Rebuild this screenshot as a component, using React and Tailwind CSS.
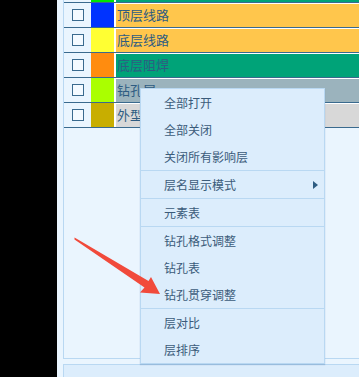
import React from 'react';

const rows = [
  { swatch: 'bg-[#00e600]', label: 'bg-[#00a378]', name: '' },
  { swatch: 'bg-[#0033ff]', label: 'bg-[#ffc64c]', name: '顶层线路' },
  { swatch: 'bg-[#ffff33]', label: 'bg-[#ffc64c]', name: '底层线路' },
  { swatch: 'bg-[#ff8c0f]', label: 'bg-[#00a378]', name: '底层阻焊' },
  { swatch: 'bg-[#aaff00]', label: 'bg-[#9bb3bd]', name: '钻孔层' },
  { swatch: 'bg-[#c8ae00]', label: 'bg-[#d8d8d8]', name: '外型层' },
];

const groups = [
  ['全部打开', '全部关闭', '关闭所有影响层'],
  ['层名显示模式'],
  ['元素表'],
  ['钻孔格式调整', '钻孔表', '钻孔贯穿调整'],
  ['层对比', '层排序'],
];

const LayerRow = ({ row }) => (
  <div className="flex h-[25px] border-b border-[#3a6a8e] bg-[#eaf5fe]">
    <div className="w-[27px] flex items-center pl-[8px]">
      <div className="w-3 h-3 border-[1.5px] border-[#3a6a8e] bg-[#f4faff]" />
    </div>
    <div className={`w-[23px] ${row.swatch}`} />
    <div className="w-[2px] bg-white" />
    <div className={`flex-1 flex items-center pl-[1px] pb-[1px] border-t border-white text-[13px] text-[#2e5c82] ${row.label}`}>
      {row.name}
    </div>
  </div>
);

const ContextMenu = () => (
  <div className="absolute left-[140px] top-[88px] w-[185px] border border-[#b9d8f2] bg-[#dcedfc] shadow-[0_1px_1px_rgba(120,160,200,0.5)]">
    {groups.map((items, gi) => (
      <div key={gi} className={gi > 0 ? 'border-t border-[#b9d8f2]' : ''}>
        {items.map((item) => (
          <div key={item} className="h-[27px] flex items-center pl-[23px] pr-[6px] text-[12px] text-[#3b5b7a]">
            <span className="flex-1">{item}</span>
            {item === '层名显示模式' && (
              <span className="w-0 h-0 border-y-[4px] border-y-transparent border-l-[5px] border-l-[#2e5c82]" />
            )}
          </div>
        ))}
      </div>
    ))}
  </div>
);

export default function App() {
  return (
    <div
      className="relative w-[359px] h-[377px] overflow-hidden flex bg-black"
      style={{ fontFamily: '"Noto Sans CJK SC", "Noto Sans", sans-serif' }}
    >
      <div className="w-[57px] flex-none bg-black" />
      <div className="flex-1 flex flex-col bg-[#eaf5fe] pl-[6px]">
        <div className="h-[381px] mt-[-22px] flex-none border-l border-b border-[#b9d8f2] bg-[#eaf5fe]">
          {rows.map((row, i) => (
            <LayerRow key={i} row={row} />
          ))}
        </div>
        <div className="mt-[5px] flex-1 border-l border-t border-[#b9d8f2] bg-[#dcedfc]" />
      </div>

      <ContextMenu />

      {/* red pointer arrow */}
      <svg className="absolute left-0 top-0 pointer-events-none" width="359" height="377">
        <polygon
          points="74.5,237.5 148.5,281 151,277 160,294 140,292.5 144.5,287.5 74.5,239.5"
          fill="#f14a3b"
        />
      </svg>
    </div>
  );
}
